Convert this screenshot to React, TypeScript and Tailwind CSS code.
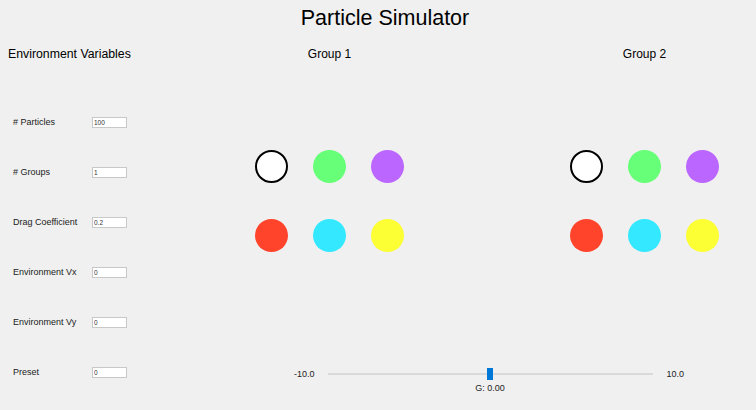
import { useState } from 'react'

const envVars = [
  { label: '# Particles', value: '100' },
  { label: '# Groups', value: '1' },
  { label: 'Drag Coefficient', value: '0.2' },
  { label: 'Environment Vx', value: '0' },
  { label: 'Environment Vy', value: '0' },
  { label: 'Preset', value: '0' },
]

const circleRows = [
  ['bg-white border-2 border-black', 'bg-[#66ff77]', 'bg-[#bb66ff]'],
  ['bg-[#ff442b]', 'bg-[#33e8ff]', 'bg-[#fcff33]'],
]

function GroupColumn({ name }: { name: string }) {
  return (
    <div className="flex flex-col w-[149px]">
      <div className="text-[12px] leading-[16px] text-center text-black">{name}</div>
      <div className="flex flex-col gap-[36px] mt-[88px]">
        {circleRows.map((row, ri) => (
          <div key={ri} className="flex gap-[25px]">
            {row.map((cls, ci) => (
              <div key={ci} className={`w-[33px] h-[33px] rounded-full ${cls}`} />
            ))}
          </div>
        ))}
      </div>
    </div>
  )
}

function GSlider() {
  const [g] = useState(0)
  const pct = ((g + 10) / 20) * 100
  return (
    <div className="flex items-start pl-[39px] text-[9px] text-[#222]">
      <div className="h-[12px] flex items-center leading-[11px]">-10.0</div>
      <div className="flex flex-col items-center ml-[13px] w-[325px]">
        <div className="relative w-full h-[12px] flex items-center">
          <div className="w-full h-[2px] bg-[#dadada]" />
          <div
            className="absolute top-0 w-[6px] h-[12px] bg-[#0078d7] -ml-[3px]"
            style={{ left: `${pct}%` }}
          />
        </div>
        <div className="mt-[3px] leading-[11px]">G: {g.toFixed(2)}</div>
      </div>
      <div className="h-[12px] flex items-center leading-[11px] ml-[14px]">10.0</div>
    </div>
  )
}

export default function App() {
  return (
    <div
      className="w-[756px] h-[410px] bg-[#f0f0f0] overflow-hidden text-black"
      style={{ fontFamily: '"Liberation Sans", Arial, sans-serif' }}
    >
      <div className="h-[37px] flex items-center justify-center pl-[14px] text-[21.5px] leading-[25px]">
        Particle Simulator
      </div>

      <div className="flex">
        {/* Environment variables */}
        <div className="w-[255px] flex flex-col">
          <div className="text-[12.3px] leading-[16px] mt-[9px] pl-[8px]">Environment Variables</div>
          <div className="flex flex-col mt-[35px]">
            {envVars.map(v => (
              <div key={v.label} className="h-[50px] flex items-center pl-[13px] pt-[1px]">
                <span className="w-[79px] text-[9px] text-[#222]">{v.label}</span>
                <input
                  readOnly
                  value={v.value}
                  className="w-[35px] h-[11px] bg-white border border-[#c8c8c8] text-[6.5px] leading-[9px] pl-[1px] text-[#333] outline-none"
                />
              </div>
            ))}
          </div>
        </div>

        {/* Groups + slider */}
        <div className="flex flex-col">
          <div className="flex mt-[9px] gap-[166px]">
            <GroupColumn name="Group 1" />
            <GroupColumn name="Group 2" />
          </div>
          <div className="mt-[116px]">
            <GSlider />
          </div>
        </div>
      </div>
    </div>
  )
}
